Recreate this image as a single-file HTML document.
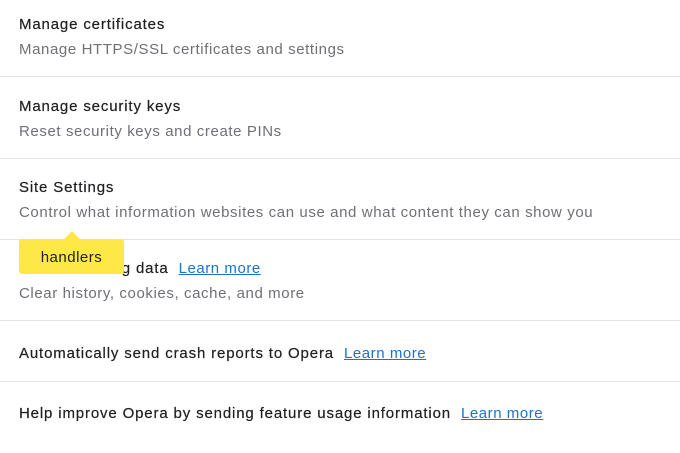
<!DOCTYPE html>
<html><head><meta charset="utf-8"><style>
body{margin:0;width:680px;height:453px;background:#fff;font-family:"Liberation Sans",sans-serif;position:relative;overflow:hidden}
.t{position:absolute;left:19px;font-size:15px;letter-spacing:0.85px;color:#202124;white-space:nowrap;line-height:18px;-webkit-text-stroke:0.2px #202124}
.t a{letter-spacing:0.55px;-webkit-text-stroke:0}
.s{position:absolute;left:19px;font-size:15px;letter-spacing:0.6px;color:#6f6f76;white-space:nowrap;line-height:18px}
.hr{position:absolute;left:0;width:680px;height:1px;background:#e3e3e6}
a{color:#1a73c8;text-decoration:underline;margin-left:10px}
.tip{position:absolute;left:19px;top:239px;width:105px;height:35px;background:#fde848;border-radius:3px;font-size:15px;letter-spacing:0.5px;color:#202124;text-align:center;line-height:38px}
.arr{position:absolute;left:64px;top:231px;width:0;height:0;border-left:8px solid transparent;border-right:8px solid transparent;border-bottom:8px solid #fde848}
</style></head><body>
<div class="t" style="top:16px">Manage certificates</div>
<div class="s" style="top:41px">Manage HTTPS/SSL certificates and settings</div>
<div class="hr" style="top:76px"></div>
<div class="t" style="top:98px">Manage security keys</div>
<div class="s" style="top:123px">Reset security keys and create PINs</div>
<div class="hr" style="top:158px"></div>
<div class="t" style="top:179px">Site Settings</div>
<div class="s" style="top:204px">Control what information websites can use and what content they can show you</div>
<div class="hr" style="top:239px"></div>
<div class="t" style="top:260px">Clear browsing data<a>Learn more</a></div>
<div class="s" style="top:285px">Clear history, cookies, cache, and more</div>
<div class="hr" style="top:320px"></div>
<div class="t" style="top:345px">Automatically send crash reports to Opera<a>Learn more</a></div>
<div class="hr" style="top:381px"></div>
<div class="t" style="top:405px">Help improve Opera by sending feature usage information<a>Learn more</a></div>
<div class="arr"></div>
<div class="tip">handlers</div>
</body></html>
